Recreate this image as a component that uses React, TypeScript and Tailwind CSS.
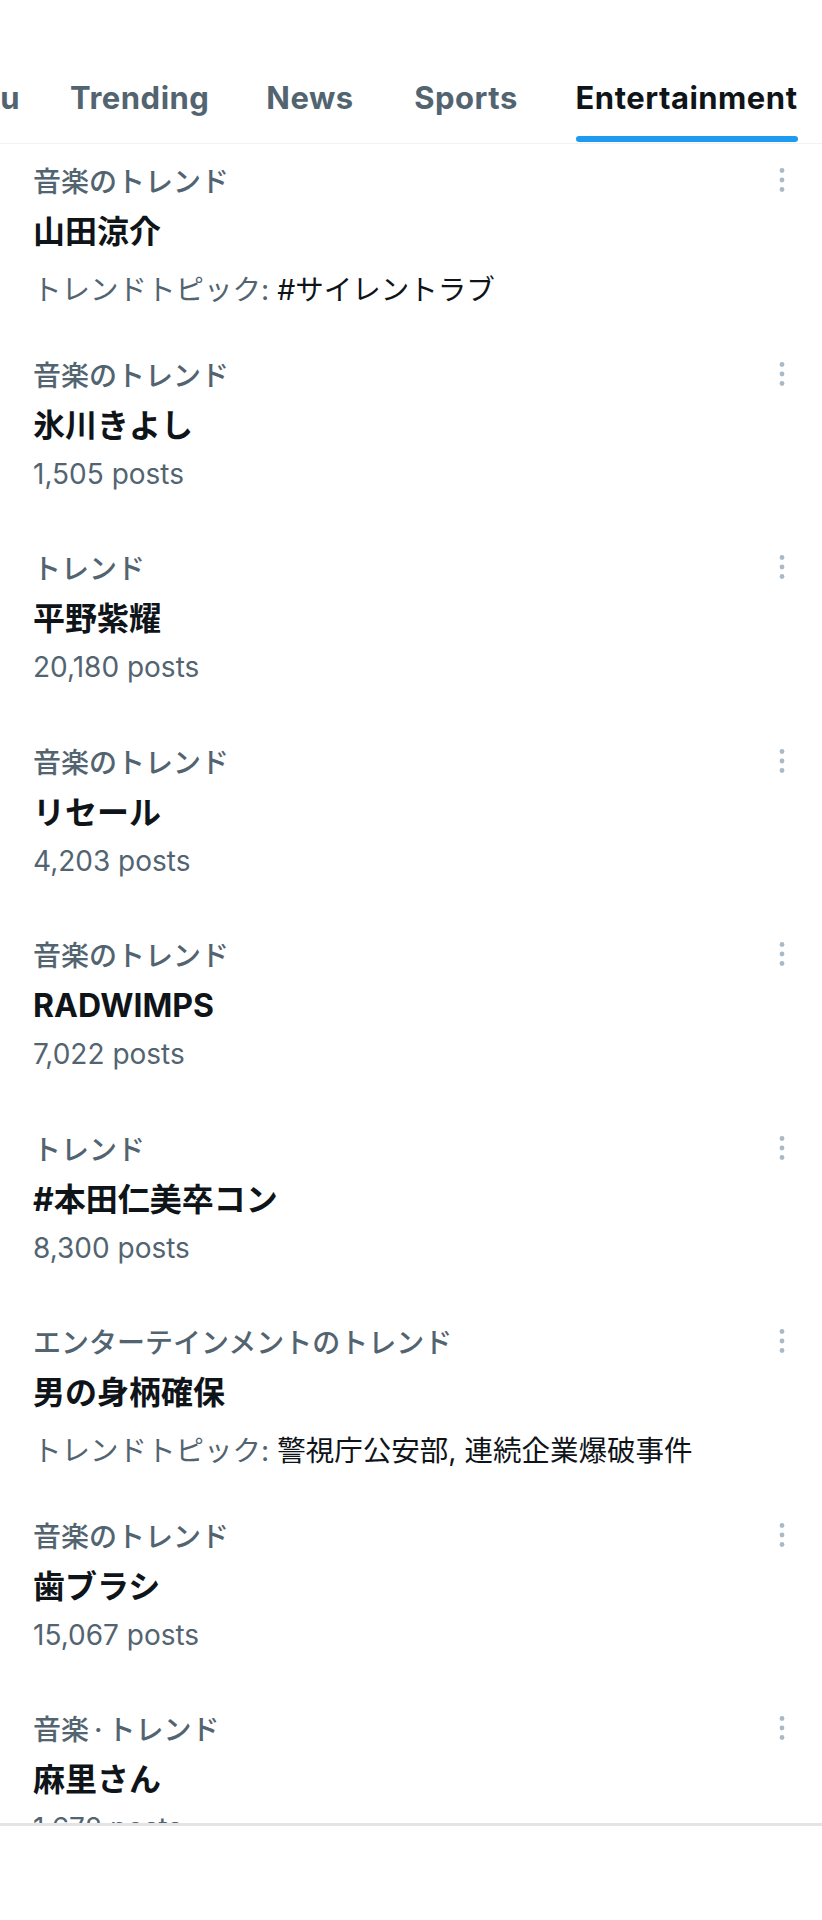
import React from "react";

type Trend = {
  category: React.ReactNode;
  title: string;
  posts?: string;
  topic?: string;
};

const trends: Trend[] = [
  { category: "音楽のトレンド", title: "山田涼介", topic: "#サイレントラブ" },
  { category: "音楽のトレンド", title: "氷川きよし", posts: "1,505 posts" },
  { category: "トレンド", title: "平野紫耀", posts: "20,180 posts" },
  { category: "音楽のトレンド", title: "リセール", posts: "4,203 posts" },
  { category: "音楽のトレンド", title: "RADWIMPS", posts: "7,022 posts" },
  { category: "トレンド", title: "#本田仁美卒コン", posts: "8,300 posts" },
  {
    category: "エンターテインメントのトレンド",
    title: "男の身柄確保",
    topic: "警視庁公安部, 連続企業爆破事件",
  },
  { category: "音楽のトレンド", title: "歯ブラシ", posts: "15,067 posts" },
  {
    category: (
      <>
        音楽<span className="px-[5px]">·</span>トレンド
      </>
    ),
    title: "麻里さん",
    posts: "1,672 posts",
  },
];

const tabs = [
  { label: "For you", w: "w-[163px] -ml-[119.5px]" },
  { label: "Trending", w: "w-[192.5px]" },
  { label: "News", w: "w-[148px]" },
  { label: "Sports", w: "w-[164px]" },
  { label: "Entertainment", w: "w-[277px]", active: true },
];

function MoreIcon() {
  return (
    <svg width="10" height="30" viewBox="0 0 10 30" className="mt-[3px] shrink-0">
      <circle cx="5" cy="5.5" r="2.4" fill="#a9bac6" />
      <circle cx="5" cy="15" r="2.4" fill="#a9bac6" />
      <circle cx="5" cy="24.5" r="2.4" fill="#a9bac6" />
    </svg>
  );
}

function TrendRow({ t }: { t: Trend }) {
  return (
    <div className="h-[193.5px] pl-[33px] pr-[35px] pt-[18px]">
      <div className="flex items-start justify-between">
        <div className="text-[28px] font-medium leading-[40px] text-[#536471]">{t.category}</div>
        <MoreIcon />
      </div>
      <div className="text-[32px] font-bold leading-[60px] text-[#0f1419]">{t.title}</div>
      {t.posts && <div className="text-[28px] leading-[36px] text-[#536471]">{t.posts}</div>}
      {t.topic && (
        <div className="mt-[10px] text-[28.5px] leading-[36px]">
          <span className="text-[#536471]">トレンドトピック: </span>
          <span className="text-[#0f1419]">{t.topic}</span>
        </div>
      )}
    </div>
  );
}

export default function App() {
  return (
    <div className="h-[1920px] w-[822px] overflow-hidden bg-white font-[Inter,'Noto_Sans_CJK_JP',sans-serif]">
      {/* tab strip, scrolled so only the tail of "For you" shows */}
      <div className="flex h-[144px] overflow-hidden border-b border-[#eff3f4]">
        {tabs.map((tab) => (
          <div key={tab.label} className={`flex shrink-0 justify-center ${tab.w}`}>
            <div className="flex flex-col justify-end">
              <span
                className={`mb-[18px] whitespace-nowrap text-[31px] font-bold leading-[40px] tracking-[0.5px] ${
                  tab.active ? "text-[#0f1419]" : "text-[#536471]"
                }`}
              >
                {tab.label}
              </span>
              <div
                className={`mb-[1px] h-[6px] rounded-full ${
                  tab.active ? "bg-[#1d9bf0]" : "bg-transparent"
                }`}
              />
            </div>
          </div>
        ))}
      </div>

      <div className="h-[1679px] overflow-hidden">
        {trends.map((t) => (
          <TrendRow key={t.title} t={t} />
        ))}
      </div>
      <div className="h-[3px] bg-[#e4e4e4]" />
    </div>
  );
}
